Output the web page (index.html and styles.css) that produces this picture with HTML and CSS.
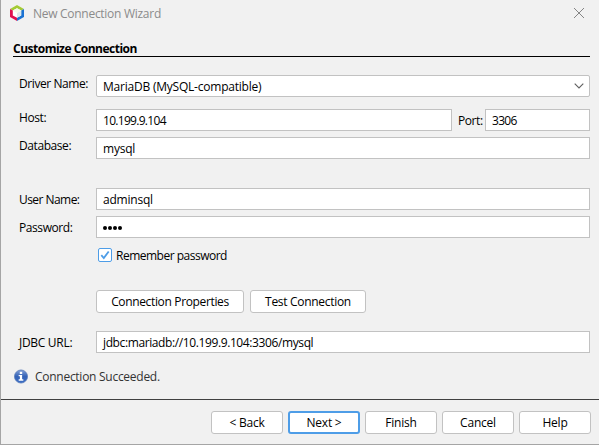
FILE: index.html
```
<!DOCTYPE html>
<html lang="en">
<head>
<meta charset="utf-8">
<title>New Connection Wizard</title>
<link rel="stylesheet" href="styles.css">
</head>
<body>
<main class="dialog">
  <header class="titlebar">
    <svg class="logo" width="14" height="16" viewBox="0 0 14 16">
      <path d="M7 0L14 4V12L7 16L0 12V4Z" fill="#fff"/>
      <path d="M0 4L7 0L14 4L11.2 5.6L7 3.3L2.8 5.6Z" fill="#a4cb35"/>
      <path d="M0 4L2.8 5.6V10.4L7 12.8V16L0 12Z" fill="#df1050"/>
      <path d="M14 4L11.2 5.6V10.4L7 12.8V16L14 12Z" fill="#1b72d2"/>
      <path d="M7 8L11.2 5.6V10.4L7 12.8Z" fill="#dce8ed"/>
      <path d="M2.8 5.6L7 3.3L11.2 5.6L7 8Z" fill="#f4f8e8"/>
    </svg>
    <h1 class="title">New Connection Wizard</h1>
    <svg class="close" width="12" height="12" viewBox="0 0 12 12"><path d="M1 1L11 11M11 1L1 11" fill="none" stroke="#858585" stroke-width="1"/></svg>
  </header>
  <h2 class="heading"><span>Customize Connection</span></h2>
  <form class="form">
    <div class="row driver"><label class="raised">Driver Name:</label>
      <div class="field combo"><span>MariaDB (MySQL-compatible)</span>
        <svg class="chevron" width="10" height="6" viewBox="0 0 10 6"><path d="M.7 .7L5 5L9.3 .7" fill="none" stroke="#606060" stroke-width="1.1"/></svg>
      </div></div>
    <div class="row host"><label class="raised">Host:</label><div class="field"><span class="number">10.199.9.104</span></div><label class="port-label">Port:</label><div class="field port"><span class="number">3306</span></div></div>
    <div class="row database"><label class="raised">Database:</label><div class="field"><span>mysql</span></div></div>
    <div class="row user"><label>User Name:</label><div class="field"><span>adminsql</span></div></div>
    <div class="row"><label>Password:</label><div class="field dots"><i></i><i></i><i></i><i></i></div></div>
    <div class="remember">
      <svg width="14" height="14" viewBox="0 0 14 14"><rect x=".5" y=".5" width="13" height="13" rx="1.5" fill="#fff" stroke="#4e9de7"/><path d="M3.3 7.2L5.8 10L10.7 3.5" fill="none" stroke="#4e9de7" stroke-width="1.8"/></svg>
      <span>Remember password</span>
    </div>
    <div class="actions"><button type="button" class="properties">Connection Properties</button><button type="button" class="test">Test Connection</button></div>
    <div class="row url"><label>JDBC URL:</label><div class="field"><span class="address">jdbc:mariadb://10.199.9.104:3306/mysql</span></div></div>
  </form>
  <div class="status">
    <svg width="14" height="15" viewBox="0 0 15 15">
      <defs><linearGradient id="info" x2="0" y2="1"><stop offset="0" stop-color="#809ed6"/><stop offset=".5" stop-color="#3563b7"/><stop offset="1" stop-color="#3c6dc4"/></linearGradient></defs>
      <circle cx="7.5" cy="7.5" r="7" fill="url(#info)" stroke="#5176b7" stroke-width=".8"/>
      <path d="M6.2 2.5H8.8V4.8H6.2ZM5 6H8.7V10.5H10V12H5V10.5H6.3V7.3H5Z" fill="#fff"/>
    </svg>
    <span>Connection Succeeded.</span>
  </div>
  <footer class="footer">
    <button type="button">&lt; Back</button><button type="button" class="primary">Next &gt;</button><button type="button">Finish</button><button type="button">Cancel</button><button type="button">Help</button>
  </footer>
</main>
</body>
</html>
```
FILE: styles.css
```
* { box-sizing: border-box; }
body { margin: 0; background: #f1f1f1; color: #000; font: 12px/16px "Open Sans", sans-serif; overflow: hidden; }
.dialog { width: 599px; height: 445px; display: flex; flex-direction: column; border-left: 1px solid #a5a5a5; border-bottom: 1px solid #a5a5a5; }
span, label, button, h1, h2 { white-space: nowrap; letter-spacing: -.22px; }
svg { display: block; flex: none; }
.titlebar { height: 28px; display: flex; align-items: center; padding: 0 14px 0 9px; }
.logo { margin-top: -2px; }
.close { margin-top: -2px; }
.title { margin: 0 0 0 9px; flex: 1; font: inherit; letter-spacing: -.28px; color: #8b8b8b; }
.heading { margin: 12px 9px 0 12px; height: 17px; border-bottom: 1px solid #000; font-size: 12px; line-height: 18px; font-weight: 700; letter-spacing: -.5px; }
.heading span { letter-spacing: inherit; }
.form { padding: 0 9px 0 18px; }
.row { display: flex; height: 22px; margin-bottom: 6px; }
.driver { margin-top: 18px; margin-bottom: 12px; }
.row label { width: 77px; flex: none; line-height: 24px; letter-spacing: -.42px; }
.row .raised { line-height: 18px; }
.row .port-label { width: 33px; padding-left: 6px; }
.field { flex: 1; display: flex; align-items: center; padding: 2px 0 0 6px; background: #fff; border: 1px solid #c2c2c2; }
.combo { border-radius: 2px; justify-content: space-between; padding-right: 5px; }
.chevron { margin-top: -2px; }
.number { letter-spacing: -.7px; }
.address { letter-spacing: -.39px; }
.port { flex: 0 0 105px; }
.user { margin-top: 29px; }
.user label { letter-spacing: -.55px; }
.dots { gap: 1px; }
.dots i { width: 4px; height: 4px; border-radius: 50%; background: #000; }
.remember { margin: 9px 0 0 79px; display: flex; align-items: center; gap: 4px; height: 16px; }
.remember span { letter-spacing: -.5px; padding-top: 2px; }
.actions { display: flex; gap: 6px; margin: 27px 0 0 77px; }
button { height: 23px; padding: 1px 0 0; font: inherit; color: #000; background: #fff; border: 1px solid #c2c2c2; border-radius: 3px; }
.properties { width: 148px; letter-spacing: -.35px; }
.test { width: 116px; letter-spacing: -.3px; }
.url { margin: 18px 0 0; }
.url label { letter-spacing: -.3px; }
.status { display: flex; align-items: center; gap: 7px; margin: 15px 0 0 13px; height: 16px; color: #333; }
.status span { padding-top: 2px; letter-spacing: -.27px; }
.footer { margin-top: auto; height: 45px; padding: 11px 8px 0; display: flex; justify-content: flex-end; gap: 5px; border-top: 1px solid #404040; }
.footer button { width: 72px; }
.footer .primary { border: 2px solid #4e9de7; padding-top: 0; }
```
